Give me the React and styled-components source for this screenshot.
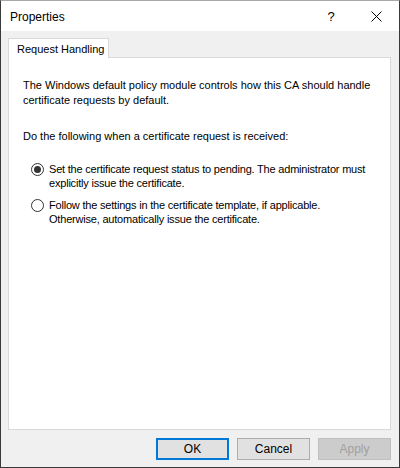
import React from "react";
import styled, { createGlobalStyle } from "styled-components";

const Global = createGlobalStyle`
  html, body { margin: 0; padding: 0; background: #ffffff; }
  body { font-family: "Liberation Sans", Arial, sans-serif; font-size: 11px; color: #000; }
  * { box-sizing: border-box; }
`;

const Window = styled.div`
  width: 400px;
  height: 468px;
  display: flex;
  flex-direction: column;
  border: 1px solid #3a3a3a;
  border-top-color: #a8a8a8;
  background: #f0f0f0;
  white-space: nowrap;
`;

const TitleBar = styled.div`
  height: 30px;
  flex: none;
  background: #ffffff;
  display: flex;
  align-items: center;
  padding-left: 9px;
  font-size: 12px;
`;

const Title = styled.div`
  flex: 1;
  padding-top: 1px;
`;

const TitleButton = styled.div`
  width: ${p => p.$w}px;
  height: 30px;
  display: flex;
  align-items: center;
  justify-content: center;
  font-size: ${p => p.$fs || 12}px;
`;

const Body = styled.div`
  flex: 1;
  display: flex;
  flex-direction: column;
  padding: 7px 8px 7px 7px;
`;

const TabStrip = styled.div`
  display: flex;
  height: 20px;
  margin-bottom: -1px;
  position: relative;
  z-index: 1;
`;

const Tab = styled.div`
  height: 20px;
  padding: 1px 0 0 8px;
  background: #ffffff;
  border: 1px solid #d9d9d9;
  border-bottom: none;
  display: flex;
  align-items: center;
  width: 101px;
`;

const Panel = styled.div`
  height: 373px;
  flex: none;
  background: #ffffff;
  border: 1px solid #d9d9d9;
  padding: 20px 14px 0 14px;
`;

const Para = styled.p`
  margin: 0 0 ${p => p.$mb || 0}px 0;
  line-height: 15px;
`;

const Options = styled.div`
  margin-top: 18px;
  display: flex;
  flex-direction: column;
  gap: 8px;
  padding-left: 8px;
`;

const Option = styled.label`
  display: flex;
  align-items: flex-start;
  gap: 5px;
  line-height: 14px;
  letter-spacing: -0.2px;
`;

const Radio = styled.span`
  width: 13px;
  height: 13px;
  flex: none;
  border-radius: 50%;
  border: 1px solid #333333;
  background: #ffffff;
  margin-top: 1px;
  display: flex;
  align-items: center;
  justify-content: center;
  &::after {
    content: "";
    width: 7px;
    height: 7px;
    border-radius: 50%;
    background: ${p => (p.$checked ? "#333333" : "transparent")};
  }
`;

const ButtonRow = styled.div`
  margin-top: 8px;
  display: flex;
  justify-content: flex-end;
  gap: 8px;
`;

const Button = styled.div`
  width: 73px;
  height: 22px;
  display: flex;
  align-items: center;
  justify-content: center;
  font-size: 12px;
  background: ${p => (p.$disabled ? "#cccccc" : "#e1e1e1")};
  color: ${p => (p.$disabled ? "#a0a0a0" : "#000000")};
  border: ${p =>
    p.$default ? "2px solid #0078d7" : p.$disabled ? "1px solid #bfbfbf" : "1px solid #adadad"};
`;

export default function App() {
  return (
    <>
      <Global />
      <Window>
        <TitleBar>
          <Title>Properties</Title>
          <TitleButton $w={44} $fs={13}>?</TitleButton>
          <TitleButton $w={46}>
            <svg width="11" height="11" viewBox="0 0 11 11">
              <path d="M0.5 0.5 L10.5 10.5 M10.5 0.5 L0.5 10.5" stroke="#000" strokeWidth="1" fill="none" />
            </svg>
          </TitleButton>
        </TitleBar>
        <Body>
          <TabStrip>
            <Tab>Request Handling</Tab>
          </TabStrip>
          <Panel>
            <Para $mb={21}>
              The Windows default policy module controls how this CA should handle
              <br />
              certificate requests by default.
            </Para>
            <Para>Do the following when a certificate request is received:</Para>
            <Options>
              <Option>
                <Radio $checked />
                <span>
                  Set the certificate request status to pending. The administrator must
                  <br />
                  explicitly issue the certificate.
                </span>
              </Option>
              <Option>
                <Radio />
                <span>
                  Follow the settings in the certificate template, if applicable.
                  <br />
                  Otherwise, automatically issue the certificate.
                </span>
              </Option>
            </Options>
          </Panel>
          <ButtonRow>
            <Button $default>OK</Button>
            <Button>Cancel</Button>
            <Button $disabled>Apply</Button>
          </ButtonRow>
        </Body>
      </Window>
    </>
  );
}
